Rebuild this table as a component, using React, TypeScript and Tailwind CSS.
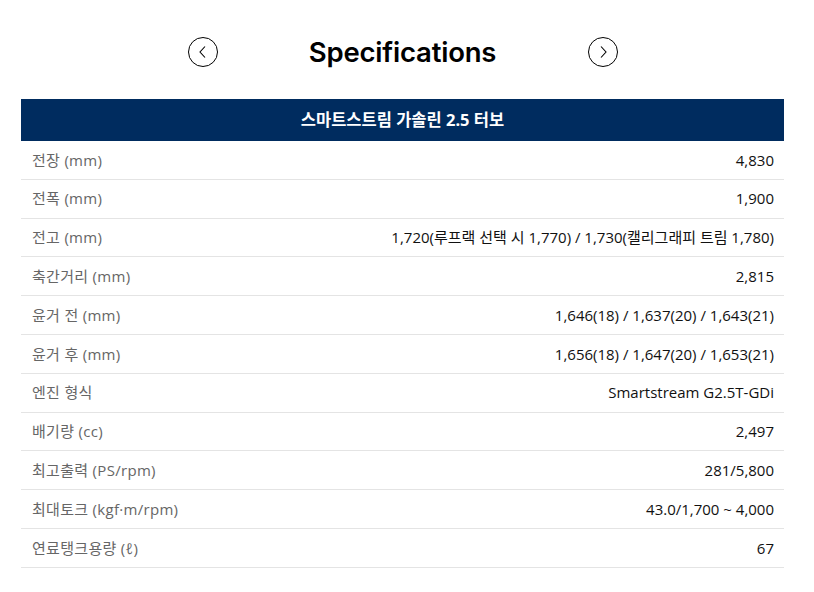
const rows: [string, string][] = [
	["전장 (mm)", "4,830"],
	["전폭 (mm)", "1,900"],
	["전고 (mm)", "1,720(루프랙 선택 시 1,770) / 1,730(캘리그래피 트림 1,780)"],
	["축간거리 (mm)", "2,815"],
	["윤거 전 (mm)", "1,646(18) / 1,637(20) / 1,643(21)"],
	["윤거 후 (mm)", "1,656(18) / 1,647(20) / 1,653(21)"],
	["엔진 형식", "Smartstream G2.5T-GDi"],
	["배기량 (cc)", "2,497"],
	["최고출력 (PS/rpm)", "281/5,800"],
	["최대토크 (kgf·m/rpm)", "43.0/1,700 ~ 4,000"],
	["연료탱크용량 (ℓ)", "67"],
];

function ArrowButton({ dir }: { dir: "left" | "right" }) {
	return (
		<button className="flex h-[30px] w-[30px] items-center justify-center rounded-full border border-black bg-white">
			<svg width="12" height="14" viewBox="0 0 12 14" fill="none">
				{dir === "left" ? (
					<path d="M8 1.5 L3 7 L8 12.5" stroke="#000" strokeWidth="1.1" />
				) : (
					<path d="M4 1.5 L9 7 L4 12.5" stroke="#000" strokeWidth="1.1" />
				)}
			</svg>
		</button>
	);
}

export default function App() {
	return (
		<div className="min-h-[592px] w-[814px] bg-white pt-[37px]">
			<div className="ml-[21px] w-[763px]">
				<div className="mx-auto flex w-[430px] items-center justify-between">
					<ArrowButton dir="left" />
					<h2 className="font-['Inter','Noto_Sans_CJK_KR',sans-serif] text-[27.5px] font-semibold leading-[30px] tracking-[-0.2px] text-black">
						Specifications
					</h2>
					<ArrowButton dir="right" />
				</div>

				<div className="mt-[32px] flex h-[42px] items-center justify-center bg-[#002c5f]">
					<span className="font-['Noto_Sans','Noto_Sans_CJK_KR',sans-serif] text-[16.5px] font-bold text-white">
						스마트스트림 가솔린 2.5 터보
					</span>
				</div>
				{rows.map(([label, value]) => (
					<div
						key={label}
						className="flex h-[38.8px] items-center justify-between border-b border-[#e4e4e4] pl-[11px] pr-[10px]"
					>
						<span className="font-['Open_Sans','Noto_Sans_CJK_KR',sans-serif] text-[15px] tracking-[0.3px] text-[#666]">
							{label}
						</span>
						<span className="font-['Open_Sans','Noto_Sans_CJK_KR',sans-serif] text-[15px] text-[#111]">
							{value}
						</span>
					</div>
				))}
			</div>
		</div>
	);
}
